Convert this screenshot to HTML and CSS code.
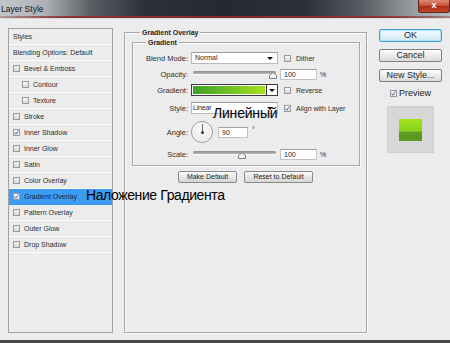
FILE: index.html
```html
<!DOCTYPE html>
<html>
<head>
<meta charset="utf-8">
<link rel="stylesheet" href="styles.css">
</head>
<body>
<div class="titlebar">
  <span class="title">Layer Style</span>
  <span class="close">x</span>
</div>
<div class="main">
  <div class="styles-panel">
    <div class="row">Styles</div>
    <div class="row">Blending Options: Default</div>
    <div class="row"><span class="cb"></span>Bevel &amp; Emboss</div>
    <div class="row sub"><span class="cb"></span>Contour</div>
    <div class="row sub"><span class="cb"></span>Texture</div>
    <div class="row"><span class="cb"></span>Stroke</div>
    <div class="row"><span class="cb on"><svg viewBox="0 0 7 7" width="5" height="5"><path d="M0.8 3.6 L2.6 5.8 L6.2 0.6" fill="none" stroke="#2b4ea6" stroke-width="1.2"/></svg></span>Inner Shadow</div>
    <div class="row"><span class="cb"></span>Inner Glow</div>
    <div class="row"><span class="cb"></span>Satin</div>
    <div class="row"><span class="cb"></span>Color Overlay</div>
    <div class="row active"><span class="cb on"><svg viewBox="0 0 7 7" width="5" height="5"><path d="M0.8 3.6 L2.6 5.8 L6.2 0.6" fill="none" stroke="#2b4ea6" stroke-width="1.2"/></svg></span>Gradient Overlay<span class="note">Наложение Градиента</span></div>
    <div class="row"><span class="cb"></span>Pattern Overlay</div>
    <div class="row"><span class="cb"></span>Outer Glow</div>
    <div class="row"><span class="cb"></span>Drop Shadow</div>
  </div>

  <div class="group outer">
    <div class="legend">Gradient Overlay</div>
    <div class="group inner">
      <div class="legend sm">Gradient</div>
      <div class="form">
        <div class="frow r1">
          <span class="lbl">Blend Mode:</span>
          <span class="select">Normal<span class="arrow"></span></span>
          <span class="opt"><span class="cb"></span>Dither</span>
        </div>
        <div class="frow r2">
          <span class="lbl">Opacity:</span>
          <span class="slider"><span class="track"></span><svg class="handle h-right" viewBox="0 0 8 7" width="8" height="7"><path d="M0.5 6.5 L0.5 3.5 L4 0.5 L7.5 3.5 L7.5 6.5 Z" fill="#f6f6f6" stroke="#7d7d7d"/></svg></span>
          <span class="num">100</span><span class="unit">%</span>
        </div>
        <div class="frow r3">
          <span class="lbl">Gradient:</span>
          <span class="gradbox"><span class="grad"></span><span class="gbtn"><span class="arrow"></span></span></span>
          <span class="opt"><span class="cb"></span>Reverse</span>
        </div>
        <div class="frow r4">
          <span class="lbl">Style:</span>
          <span class="select st">Linear<span class="arrow"></span><span class="note2">Линейный</span></span>
          <span class="opt"><span class="cb on"><svg viewBox="0 0 7 7" width="5" height="5"><path d="M0.8 3.6 L2.6 5.8 L6.2 0.6" fill="none" stroke="#2b4ea6" stroke-width="1.2"/></svg></span>Align with Layer</span>
        </div>
        <div class="frow r5">
          <span class="lbl">Angle:</span>
          <span class="dial"><span class="hand"></span><span class="dot"></span></span>
          <span class="num short">90</span><span class="deg">°</span>
        </div>
        <div class="frow r6">
          <span class="lbl">Scale:</span>
          <span class="slider"><span class="track"></span><svg class="handle h-mid" viewBox="0 0 8 7" width="8" height="7"><path d="M0.5 6.5 L0.5 3.5 L4 0.5 L7.5 3.5 L7.5 6.5 Z" fill="#f6f6f6" stroke="#7d7d7d"/></svg></span>
          <span class="num">100</span><span class="unit">%</span>
        </div>
      </div>
    </div>
    <div class="btnrow">
      <span class="btn b1">Make Default</span>
      <span class="btn b2">Reset to Default</span>
    </div>
  </div>

  <div class="actions">
    <span class="bigbtn ok">OK</span>
    <span class="bigbtn">Cancel</span>
    <span class="bigbtn">New Style...</span>
    <span class="preview"><span class="cb on"><svg viewBox="0 0 7 7" width="5" height="5"><path d="M0.8 3.6 L2.6 5.8 L6.2 0.6" fill="none" stroke="#2b4ea6" stroke-width="1.2"/></svg></span>Preview</span>
    <span class="swatch"><span class="green"></span></span>
  </div>
</div>
<div class="bottom"></div>
</body>
</html>
```

FILE: styles.css
```css
html, body {
  margin: 0;
  padding: 0;
}
body {
  width: 450px;
  height: 343px;
  overflow: hidden;
  background: #ececec;
  font-family: "Liberation Sans", Arial, sans-serif;
  color: #2a2a2a;
}

/* title bar */
.titlebar {
  height: 19px;
  position: relative;
  display: flex;
  align-items: flex-start;
  background: linear-gradient(to right, #c3c6c9 0%, #aeb2b6 10%, #5b6066 20%, #2c3137 32%, #262a30 50%, #2d3238 68%, #565b61 80%, #9a9ea2 92%, #b9bcbf 100%);
  box-shadow: inset 0 -1px 0 #d9d9d9;
}
.titlebar::after {
  content: "";
  position: absolute;
  left: 0;
  right: 0;
  bottom: 1px;
  height: 2px;
  background: linear-gradient(to right, rgba(140,50,50,0.3) 0%, #8c3535 15%, #7a2a2a 50%, #8c3535 85%, rgba(140,50,50,0.4) 100%);
}
.title {
  font-size: 8.5px;
  color: #161616;
  line-height: 18px;
  padding-left: 1px;
}
.close {
  margin-left: auto;
  width: 32px;
  height: 13px;
  box-sizing: border-box;
  border: 1px solid #5e2a22;
  border-top: none;
  border-radius: 0 0 3px 3px;
  background: linear-gradient(#e08a72 0%, #c9553b 45%, #ac2e1a 55%, #c0442a 100%);
  color: #fff;
  font-weight: bold;
  font-size: 9px;
  line-height: 11px;
  text-align: center;
}

/* main */
.main {
  display: flex;
  align-items: flex-start;
  height: 321px;
  box-sizing: border-box;
  padding: 9px 0 0 8px;
}

.styles-panel {
  width: 105px;
  height: 305px;
  box-sizing: border-box;
  border: 1px solid #a2a2a2;
  background: #ececec;
  display: flex;
  flex-direction: column;
}
.row {
  position: relative;
  height: 15px;
  border-bottom: 1px solid #fbfbfb;
  display: flex;
  align-items: center;
  gap: 4px;
  padding-left: 4px;
  font-size: 7px;
  color: #2c2c2c;
  white-space: nowrap;
}
.row.sub {
  padding-left: 13px;
}
.row.active {
  background: #3b9cf2;
  border-bottom-color: #3b9cf2;
  color: #16243a;
}
.cb {
  width: 7px;
  height: 7px;
  box-sizing: border-box;
  border: 1px solid #9a9a9a;
  background: linear-gradient(#f6f6f6, #d6d6d6);
  display: inline-flex;
  align-items: center;
  justify-content: center;
  flex: none;
}
.cb.on {
  background: linear-gradient(#ffffff, #e2e2e2);
}
.cb svg {
  display: block;
}
.note {
  position: absolute;
  left: 77px;
  top: -1px;
  z-index: 2;
  font-size: 14px;
  line-height: 14px;
  color: #000;
  letter-spacing: -0.4px;
}

/* groups */
.group {
  box-sizing: border-box;
  border: 1px solid #a8a8a8;
  box-shadow: inset 1px 1px 0 #fafafa, 1px 1px 0 #fafafa;
}
.outer {
  margin-left: 11px;
  margin-top: 4px;
  width: 243px;
  height: 301px;
}
.legend {
  margin: -5px 0 0 15px;
  padding: 0 2px;
  width: fit-content;
  background: #ececec;
  font-size: 7px;
  font-weight: bold;
  line-height: 9px;
  height: 9px;
  color: #262626;
}
.legend.sm {
  margin-left: 13px;
}
.inner {
  margin: 5px 0 0 7px;
  width: 228px;
  padding-bottom: 5px;
}
.form {
  margin-top: 5px;
  display: flex;
  flex-direction: column;
}
.frow {
  display: flex;
  align-items: center;
  height: 12px;
  font-size: 7.5px;
  color: #2e2e2e;
}
.r2, .r3 { margin-top: 4px; }
.r4 { margin-top: 6px; }
.r5 { margin-top: 7px; height: 22px; }
.r6 { margin-top: 5px; }
.lbl {
  width: 55px;
  margin-right: 3px;
  text-align: right;
  white-space: nowrap;
}
.select {
  position: relative;
  width: 87px;
  height: 12px;
  box-sizing: border-box;
  background: #fff;
  border: 1px solid #b9b9b9;
  border-top-color: #9c9c9c;
  font-size: 7px;
  line-height: 10px;
  padding-left: 3px;
  color: #2a2a2a;
}
.select.st {
  padding-left: 1px;
  letter-spacing: -0.2px;
}
.select .arrow {
  position: absolute;
  right: 4px;
  top: 4px;
}
.arrow {
  width: 0;
  height: 0;
  border-left: 3px solid transparent;
  border-right: 3px solid transparent;
  border-top: 3px solid #111;
}
.note2 {
  position: absolute;
  left: 21px;
  top: 3px;
  z-index: 2;
  font-size: 14px;
  line-height: 14px;
  color: #000;
  letter-spacing: -0.2px;
  white-space: nowrap;
}
.opt {
  margin-left: 6px;
  display: flex;
  align-items: center;
  gap: 5px;
  font-size: 7px;
  white-space: nowrap;
}
.slider {
  position: relative;
  width: 83px;
  height: 12px;
  margin: 0 4px 0 2px;
}
.track {
  position: absolute;
  left: 0;
  right: 0;
  top: 3px;
  height: 3px;
  border-radius: 2px;
  background: linear-gradient(#8d8d8d, #b8b8b8);
  box-shadow: 0 1px 0 #fafafa;
}
.handle {
  position: absolute;
  top: 4px;
  display: block;
}
.h-right { left: 76px; }
.h-mid { left: 45px; }
.num {
  width: 37px;
  height: 11px;
  box-sizing: border-box;
  background: #fff;
  border: 1px solid #c2c2c2;
  border-top-color: #a0a0a0;
  font-size: 7px;
  line-height: 9px;
  padding-left: 3px;
  color: #222;
}
.unit {
  margin-left: 3px;
  font-size: 7px;
}
.gradbox {
  width: 87px;
  height: 12px;
  box-sizing: border-box;
  border: 1px solid #3a3a3a;
  display: flex;
  background: #fff;
}
.grad {
  flex: 1;
  background: linear-gradient(to right, #3f9f2c, #74c424 55%, #a8e11c);
  border: 1px solid #fff;
}
.gbtn {
  width: 10px;
  border-left: 1px solid #3a3a3a;
  display: flex;
  align-items: center;
  justify-content: center;
  background: #fff;
}
.dial {
  position: relative;
  width: 22px;
  height: 22px;
  box-sizing: border-box;
  border-radius: 50%;
  border: 1px solid #9a9a9a;
  background: radial-gradient(circle at 50% 40%, #fdfdfd 0%, #ececec 60%, #d6d6d6 100%);
  box-shadow: inset 0 0 0 1px #fff;
}
.hand {
  position: absolute;
  left: 9.5px;
  top: 2px;
  width: 1px;
  height: 8px;
  background: #6a6a6a;
}
.dot {
  position: absolute;
  left: 8.5px;
  top: 8.5px;
  width: 3px;
  height: 3px;
  border-radius: 50%;
  background: #333;
}
.num.short {
  margin-left: 5px;
  width: 30px;
}
.deg {
  margin-left: 4px;
  font-size: 7px;
  align-self: flex-start;
  margin-top: 5px;
}
.btnrow {
  margin-top: 5px;
  display: flex;
  justify-content: center;
  gap: 7px;
}
.btn {
  height: 12px;
  box-sizing: border-box;
  border: 1px solid #8a8a8a;
  border-radius: 2px;
  background: linear-gradient(#fbfbfb, #e6e6e6 50%, #d6d6d6);
  font-size: 7px;
  line-height: 10px;
  text-align: center;
  color: #262626;
}
.b1 { width: 59px; }
.b2 { width: 69px; }

/* right column */
.actions {
  margin-left: 12px;
  margin-top: 1px;
  width: 63px;
  display: flex;
  flex-direction: column;
  align-items: center;
}
.bigbtn {
  width: 63px;
  height: 13px;
  box-sizing: border-box;
  border: 1px solid #7f7f7f;
  border-radius: 2px;
  background: linear-gradient(#fcfcfc, #ececec 50%, #dadada);
  font-size: 9px;
  line-height: 11px;
  text-align: center;
  color: #1e1e1e;
  margin-bottom: 7px;
}
.bigbtn.ok {
  border-color: #3f9fd2;
  box-shadow: inset 0 0 0 1px #b6e4f8;
  background: linear-gradient(#f4fbff, #e3f2fa 50%, #cfe7f3);
}
.preview {
  margin-top: -1px;
  display: flex;
  align-items: center;
  gap: 2px;
  font-size: 9px;
  line-height: 10px;
  color: #1e1e1e;
}
.swatch {
  margin-top: 8px;
  width: 47px;
  height: 47px;
  box-sizing: border-box;
  background: #d7d7d7;
  border: 1px solid #cfcfcf;
  display: flex;
  align-items: center;
  justify-content: center;
}
.green {
  width: 23px;
  height: 22px;
  background: linear-gradient(#a3e21c 0%, #86d41a 55%, #5e9d22 60%, #5a9a22 100%);
}

.bottom {
  height: 3px;
  background: #474747;
}
```
